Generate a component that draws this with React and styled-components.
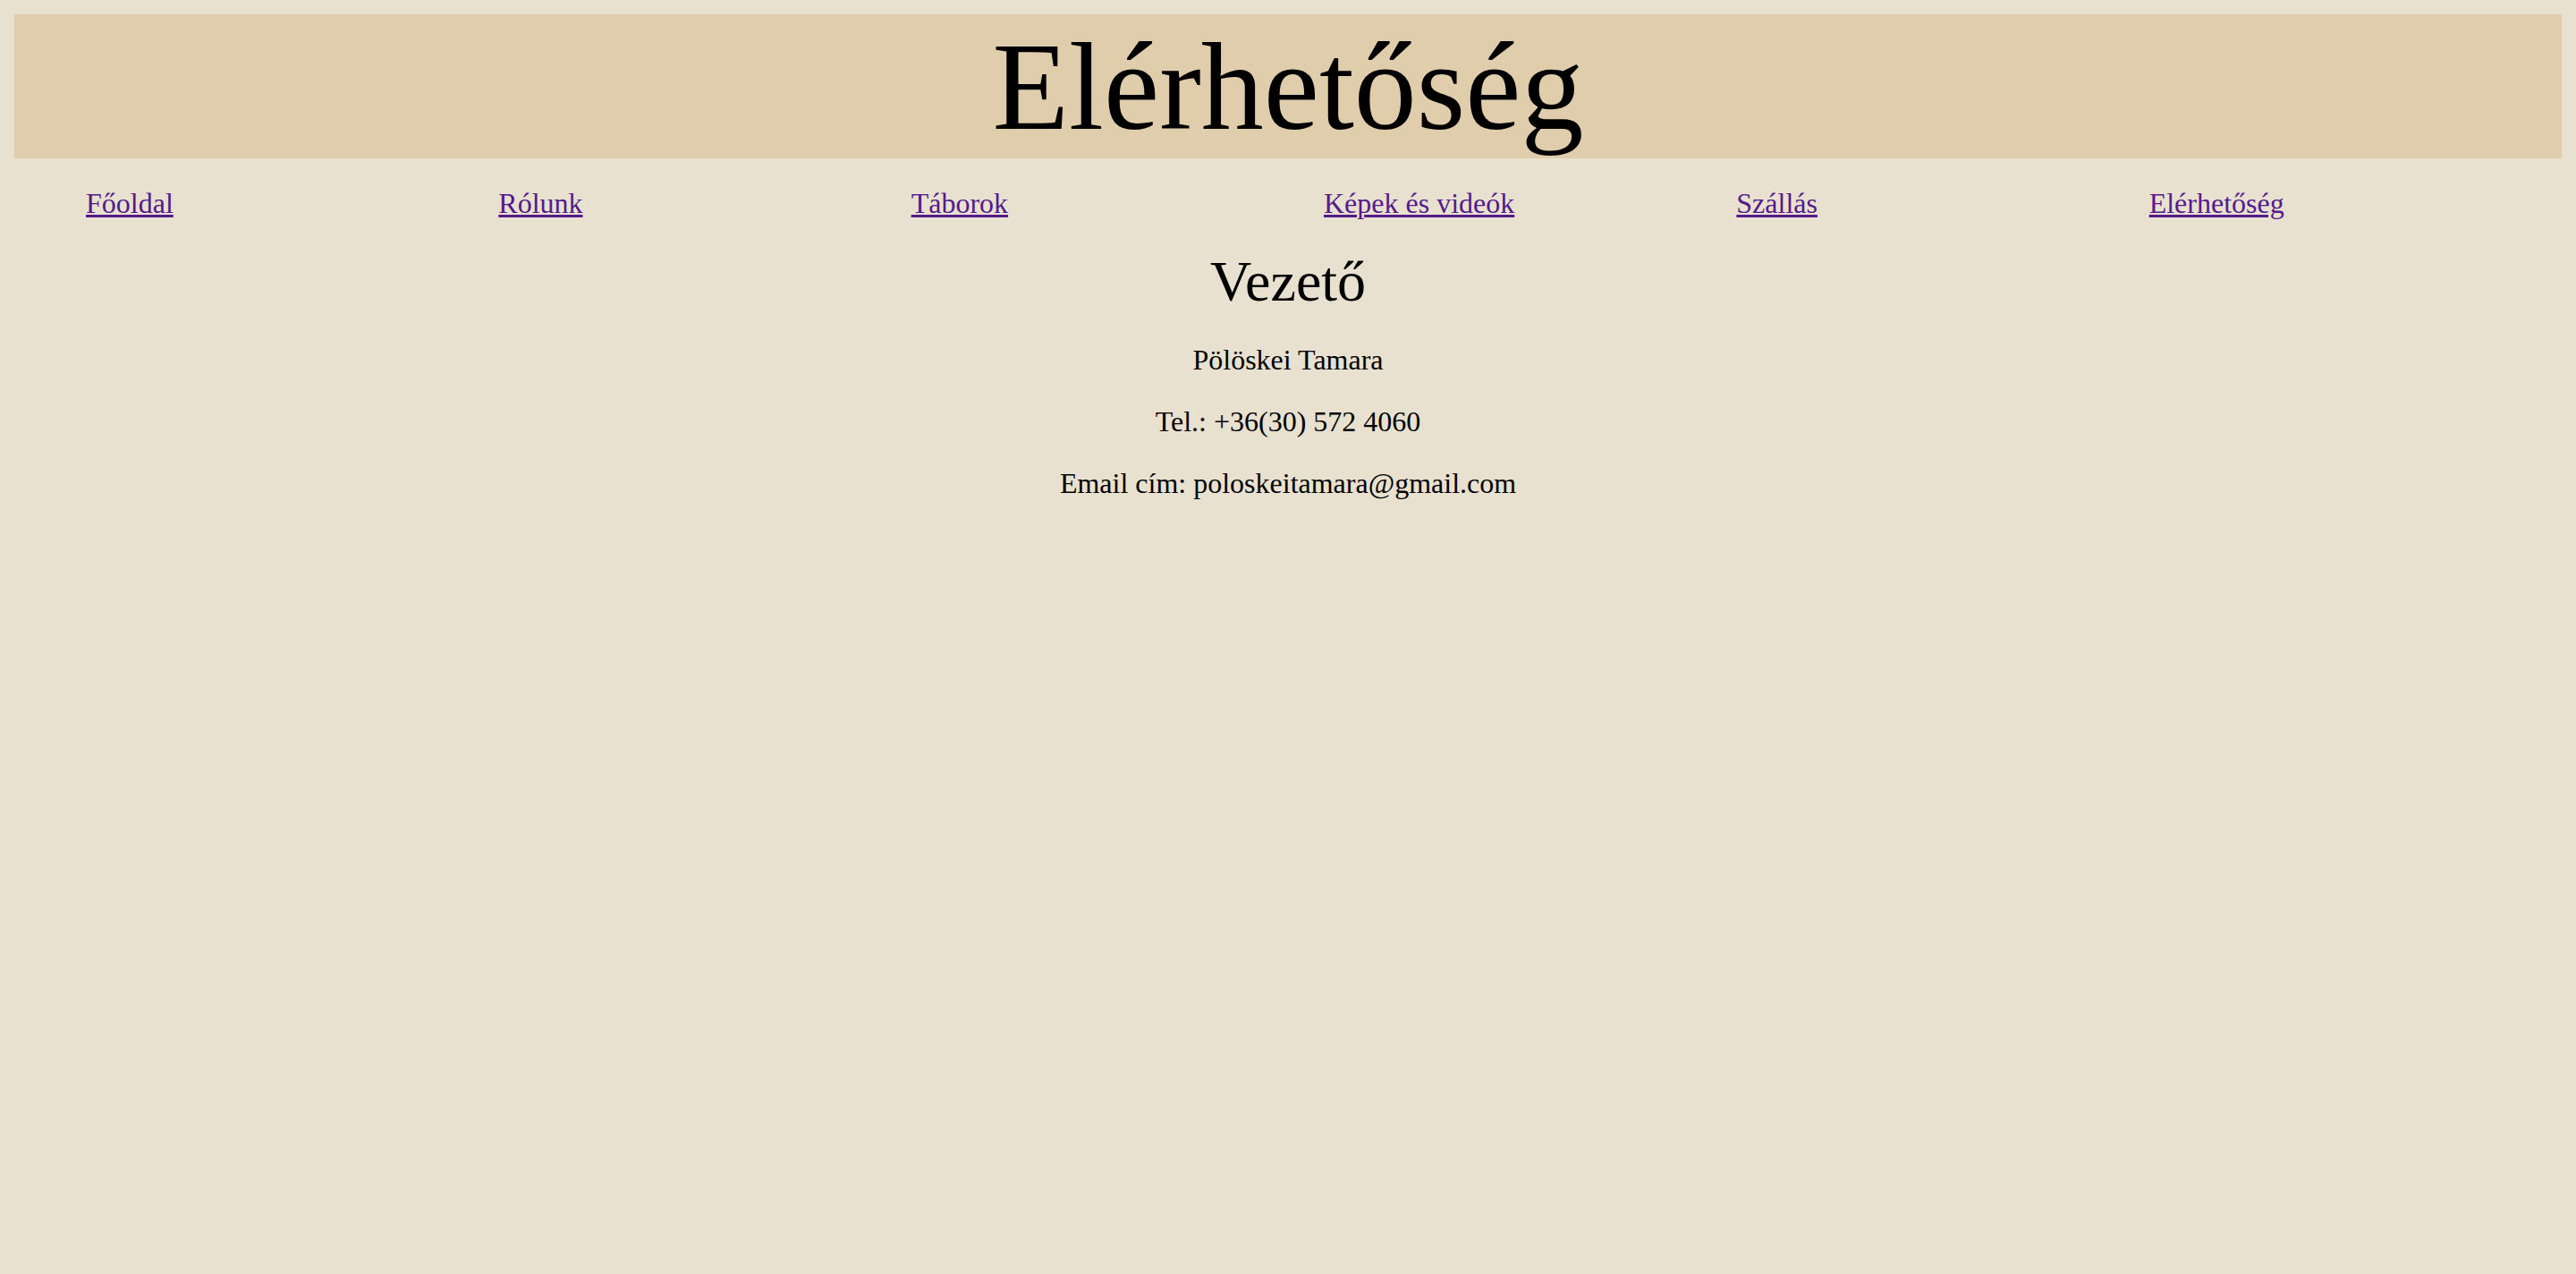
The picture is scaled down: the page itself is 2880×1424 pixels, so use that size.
import React from "react";
import styled, { createGlobalStyle } from "styled-components";

const GlobalStyle = createGlobalStyle`
  html {
    background: #e8e1cf;
  }
  body {
    margin: 16px;
    background: #e8e1cf;
    font-family: "Liberation Serif", "Times New Roman", serif;
    color: #000;
  }
`;

const links = ["Főoldal", "Rólunk", "Táborok", "Képek és videók", "Szállás", "Elérhetőség"];

const App = () => {
  return (
    <>
      <GlobalStyle />
      <Header>
        <Title>Elérhetőség</Title>
      </Header>
      <Nav>
        {links.map((label) => (
          <NavItem key={label}>
            <NavLink href="#">{label}</NavLink>
          </NavItem>
        ))}
      </Nav>
      <Contact>
        <Heading>Vezető</Heading>
        <Line>Pölöskei Tamara</Line>
        <Line>Tel.: +36(30) 572 4060</Line>
        <Line>Email cím: poloskeitamara@gmail.com</Line>
      </Contact>
    </>
  );
};

const Header = styled.header`
  background: #e0cdac;
  text-align: center;
`;

const Title = styled.h1`
  margin: 0;
  font-size: 140px;
  font-weight: normal;
  line-height: normal;
`;

const Nav = styled.ul`
  display: flex;
  list-style: none;
  margin: 32px 0;
  padding: 0 0 0 80px;
  font-size: 32px;
`;

const NavItem = styled.li`
  flex: 1 1 0;
  min-width: 0;
`;

const NavLink = styled.a`
  color: #551a8b;
  text-decoration: underline;
  text-decoration-thickness: 3px;
`;

const Contact = styled.section`
  text-align: center;
`;

const Heading = styled.h2`
  margin: 32px 0;
  font-size: 64px;
  font-weight: normal;
`;

const Line = styled.p`
  margin: 32px 0;
  font-size: 32px;
`;

export default App;
